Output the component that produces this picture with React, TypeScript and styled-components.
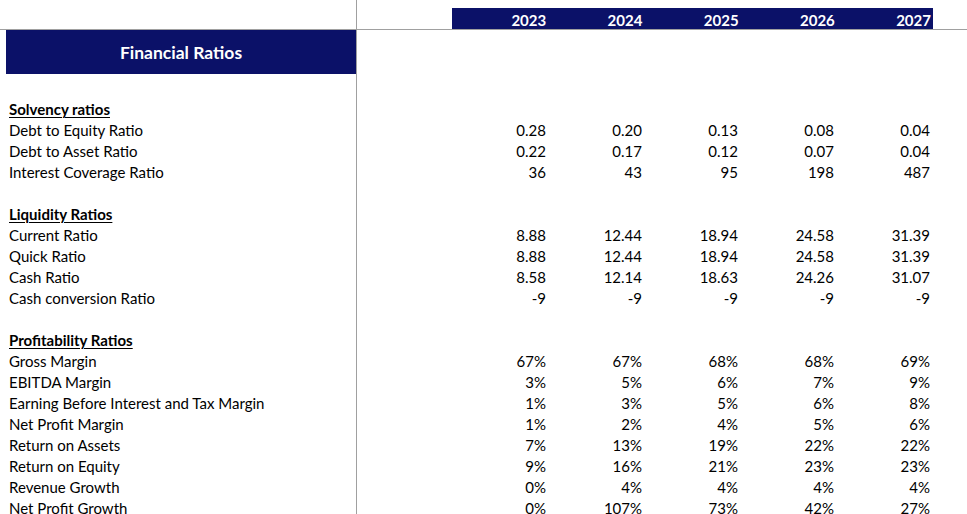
import React from "react";
import styled, { createGlobalStyle } from "styled-components";

const GlobalStyle = createGlobalStyle`
  html, body { margin: 0; padding: 0; background: #ffffff; }
  body { font-family: Lato, "Open Sans", "Liberation Sans", sans-serif; color: #000; }
  * { box-sizing: border-box; }
`;

const NAVY = "#0b1168";
const LINE = "#a0a0a0";

const Page = styled.div`
  width: 967px;
  height: 514px;
  overflow: hidden;
  display: flex;
  flex-direction: column;
  background: #fff;
`;

const HeaderBar = styled.div`
  height: 30px;
  flex-shrink: 0;
  border-bottom: 1px solid ${LINE};
  display: grid;
  grid-template-columns: 357px 95px 481px 1fr;
`;

const FrozenCell = styled.div`
  border-right: 1px solid ${LINE};
`;

const YearBand = styled.div`
  margin-top: 8px;
  height: 21px;
  background: ${NAVY};
  display: grid;
  grid-template-columns: repeat(5, 1fr);
`;

const Year = styled.div`
  color: #fff;
  font-weight: 700;
  font-size: 15px;
  line-height: 19px;
  padding-top: 3px;
  text-align: right;
  padding-right: 2px;
`;

const Body = styled.div`
  display: flex;
  flex-direction: column;
`;

const Row = styled.div<{ $h?: number }>`
  height: ${(p) => p.$h ?? 21}px;
  display: grid;
  grid-template-columns: 357px 95px repeat(5, 96px) 1fr;
  flex-shrink: 0;
`;

const LabelCell = styled.div<{ $section?: boolean }>`
  border-right: 1px solid ${LINE};
  padding: 5px 0 0 9px;
  font-size: 15px;
  line-height: 19px;
  white-space: nowrap;
  font-weight: ${(p) => (p.$section ? 700 : 400)};
  text-decoration: ${(p) => (p.$section ? "underline" : "none")};
  text-underline-offset: 2px;
  text-decoration-thickness: 1px;
`;

const TitleCell = styled.div`
  border-right: 1px solid ${LINE};
  padding-left: 6px;
  display: flex;
`;

const TitleBox = styled.div`
  flex: 1;
  background: ${NAVY};
  color: #fff;
  font-weight: 700;
  font-size: 17.5px;
  display: flex;
  align-items: center;
  justify-content: center;
`;

const ValueCell = styled.div`
  padding: 5px 2px 0 0;
  font-size: 15px;
  line-height: 19px;
  text-align: right;
  white-space: nowrap;
`;

type Line = { label: string; values: string[] };
type Section = { title: string; lines: Line[] };

const years = ["2023", "2024", "2025", "2026", "2027"];

const sections: Section[] = [
  {
    title: "Solvency ratios",
    lines: [
      { label: "Debt to Equity Ratio", values: ["0.28", "0.20", "0.13", "0.08", "0.04"] },
      { label: "Debt to Asset Ratio", values: ["0.22", "0.17", "0.12", "0.07", "0.04"] },
      { label: "Interest Coverage Ratio", values: ["36", "43", "95", "198", "487"] },
    ],
  },
  {
    title: "Liquidity Ratios",
    lines: [
      { label: "Current Ratio", values: ["8.88", "12.44", "18.94", "24.58", "31.39"] },
      { label: "Quick Ratio", values: ["8.88", "12.44", "18.94", "24.58", "31.39"] },
      { label: "Cash Ratio", values: ["8.58", "12.14", "18.63", "24.26", "31.07"] },
      { label: "Cash conversion Ratio", values: ["-9", "-9", "-9", "-9", "-9"] },
    ],
  },
  {
    title: "Profitability Ratios",
    lines: [
      { label: "Gross Margin", values: ["67%", "67%", "68%", "68%", "69%"] },
      { label: "EBITDA Margin", values: ["3%", "5%", "6%", "7%", "9%"] },
      { label: "Earning Before Interest and Tax Margin", values: ["1%", "3%", "5%", "6%", "8%"] },
      { label: "Net Profit Margin", values: ["1%", "2%", "4%", "5%", "6%"] },
      { label: "Return on Assets", values: ["7%", "13%", "19%", "22%", "22%"] },
      { label: "Return on Equity", values: ["9%", "16%", "21%", "23%", "23%"] },
      { label: "Revenue Growth", values: ["0%", "4%", "4%", "4%", "4%"] },
      { label: "Net Profit Growth", values: ["0%", "107%", "73%", "42%", "27%"] },
    ],
  },
];

const BlankRow = () => (
  <Row>
    <LabelCell />
  </Row>
);

export default function App() {
  return (
    <>
      <GlobalStyle />
      <Page>
        <HeaderBar>
          <FrozenCell />
          <div />
          <YearBand>
            {years.map((y) => (
              <Year key={y}>{y}</Year>
            ))}
          </YearBand>
          <div />
        </HeaderBar>
        <Body>
          <Row $h={44}>
            <TitleCell>
              <TitleBox>Financial Ratios</TitleBox>
            </TitleCell>
          </Row>
          {sections.map((s) => (
            <React.Fragment key={s.title}>
              <BlankRow />
              <Row>
                <LabelCell $section>{s.title}</LabelCell>
              </Row>
              {s.lines.map((l) => (
                <Row key={l.label}>
                  <LabelCell>{l.label}</LabelCell>
                  <div />
                  {l.values.map((v, i) => (
                    <ValueCell key={i}>{v}</ValueCell>
                  ))}
                </Row>
              ))}
            </React.Fragment>
          ))}
        </Body>
      </Page>
    </>
  );
}
